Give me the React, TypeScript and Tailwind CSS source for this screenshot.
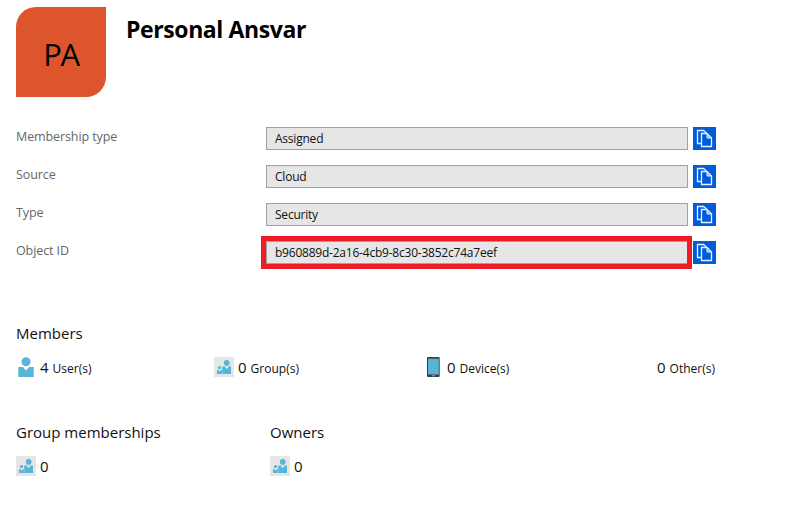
import React from "react";

function CopyIcon() {
  return (
    <svg width="23" height="23" viewBox="0 0 23 23" fill="none" stroke="#e6f0fc" strokeWidth="1.3">
      <path d="M8 16.5H4.5V3.5H10.5L13.5 6" />
      <path d="M8.5 6.5H14L18.5 11V19.5H8.5Z" fill="#015cda" />
      <path d="M14 6.5V11H18.5Z" fill="#8db9f0" strokeWidth="1" />
    </svg>
  );
}

function Field({ label, value, marked }: { label: string; value: React.ReactNode; marked?: boolean }) {
  return (
    <div className="flex h-[23px] w-[700px]">
      <div className="h-[20px] w-[250px] text-[12.5px] tracking-[-0.1px] text-[#666] leading-[20px]">{label}</div>
      <div className="relative flex h-[23px] w-[422px] items-center border border-[#a0a0a0] bg-[#e6e6e6] pl-2 tracking-[-0.22px] text-[#111]">
        {value}
        {marked && <div className="absolute -left-[6px] -top-[6px] h-[33px] w-[431px] border-5 border-[#ee1c25]" />}
      </div>
      <button className="ml-[5px] h-[23px] w-[23px] bg-[#015cda]">
        <CopyIcon />
      </button>
    </div>
  );
}

function UserIcon() {
  return (
    <svg width="20" height="20" viewBox="0 0 20 20" fill="#59b4d9">
      <circle cx="10" cy="4.7" r="4.5" />
      <path d="M2.3 10H7L10 13.5L13 10H17.7V20H2.3Z" />
    </svg>
  );
}

function GroupIcon() {
  return (
    <svg width="20" height="20" viewBox="0 0 20 20" fill="#59b4d9">
      <path fill="#e6e6e6" d="M0 0H20V20H0Z" />
      <circle cx="12.7" cy="5.9" r="2.8" />
      <path d="M8.2 9.5H17V17H8.2Z" />
      <path fill="#f4f4f4" d="M10.6 9.4H14.8L12.7 12Z" />
      <circle cx="5.5" cy="10.6" r="1.7" />
      <path d="M3 13H7.8V17H3Z" />
      <path fill="#f4f4f4" d="M4.4 13H6.6L5.5 14.4Z" />
    </svg>
  );
}

function DeviceIcon() {
  return (
    <svg width="20" height="20" viewBox="0 0 20 20">
      <rect x="4" y="0" width="12.7" height="20" rx="1" fill="#3e3e3e" />
      <path d="M5 1.7H15.8V17.5H5Z" fill="#59b4d9" />
      <path d="M9 18.3H12V19.2H9Z" fill="#aaa" />
    </svg>
  );
}

function Count({ value, label }: { value: string; label: string }) {
  return (
    <div className="flex items-baseline gap-1 pt-[2px] leading-5">
      <span className="text-[15px]">{value}</span>
      <span className="text-[12px]">{label}</span>
    </div>
  );
}

export default function App() {
  return (
    <div className="h-[520px] w-[804px] bg-white pl-4 pt-[7px] font-['Open_Sans','Noto_Sans',sans-serif] text-[#111]">
      <header className="flex h-[90px]">
        <div className="flex h-[90px] w-[90px] items-center justify-center rounded-tl-[20px] rounded-br-[20px] bg-[#dc552c] pt-[4px] text-[31px] text-black">
          <span className="tracking-[-1.5px]">PA</span>
        </div>
        <h1 className="ml-5 mt-[5px] whitespace-nowrap text-[23px] font-bold leading-[34px] text-black">
          <span className="tracking-[-0.4px]">Personal Ansvar</span>
        </h1>
      </header>
      <section className="mt-[30px] flex flex-col gap-[15px] text-[12px]">
        <Field label="Membership type" value="Assigned" />
        <Field label="Source" value="Cloud" />
        <Field label="Type" value="Security" />
        <Field label="Object ID" value="b960889d-2a16-4cb9-8c30-3852c74a7eef" marked />
      </section>
      <h2 className="mt-[58px] text-[15px] leading-[22px]">Members</h2>
      <div className="mt-[13px] flex h-[20px] w-[700px] items-center whitespace-nowrap">
        <div className="flex w-[198px] items-center gap-1"><UserIcon /><Count value="4" label="User(s)" /></div>
        <div className="flex w-[209px] items-center gap-1"><GroupIcon /><Count value="0" label="Group(s)" /></div>
        <div className="flex w-[234px] items-center gap-1"><DeviceIcon /><Count value="0" label="Device(s)" /></div>
        <Count value="0" label="Other(s)" />
      </div>
      <section className="mt-[44px] flex">
        <div className="w-[254px]">
          <h2 className="text-[15px] leading-[22px]">Group memberships</h2>
          <div className="mt-[13px] flex h-[20px] items-center gap-1 text-[15px]"><GroupIcon /><span>0</span></div>
        </div>
        <div>
          <h2 className="text-[15px] leading-[22px]">Owners</h2>
          <div className="mt-[13px] flex h-[20px] items-center gap-1 text-[15px]"><GroupIcon /><span>0</span></div>
        </div>
      </section>
    </div>
  );
}
